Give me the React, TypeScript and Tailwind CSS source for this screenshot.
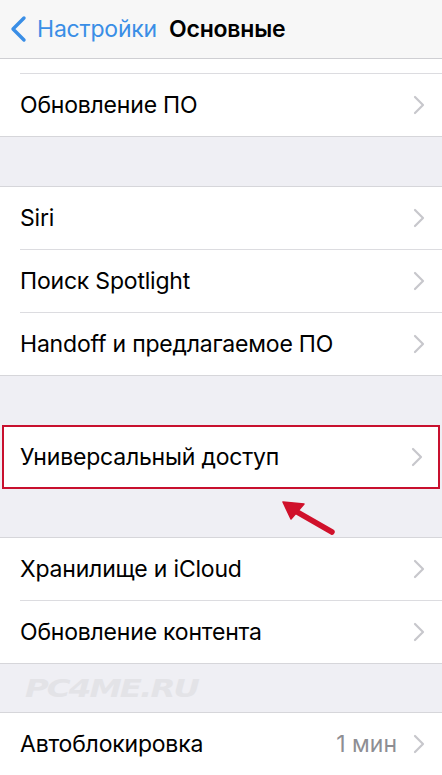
import React from "react";

const font = { fontFamily: 'Inter, "Liberation Sans", Arial, sans-serif' };

function Chevron() {
  return (
    <svg width="12" height="20" viewBox="0 0 12 20" className="shrink-0">
      <path d="M2 2 L10 10 L2 18" fill="none" stroke="#c7c7cc" strokeWidth="2.2" strokeLinecap="round" strokeLinejoin="round" />
    </svg>
  );
}

function Row({ label, value }: { label: string; value?: string }) {
  return (
    <div className="flex h-[62px] items-center bg-white pl-[20px] pr-[17px]">
      <div className="flex-1 text-[23px] tracking-[-0.2px] text-black">{label}</div>
      {value && <div className="mr-[16px] text-[23px] text-[#8e8e93]">{value}</div>}
      <Chevron />
    </div>
  );
}

function Sep() {
  return <div className="ml-[20px] h-px bg-[#dcdce0]" />;
}

function Group({ items }: { items: { label: string; value?: string }[] }) {
  return (
    <div className="border-y border-[#d6d6da] bg-white">
      {items.map((it, i) => (
        <React.Fragment key={it.label}>
          <Row label={it.label} value={it.value} />
          {i < items.length - 1 && <Sep />}
        </React.Fragment>
      ))}
    </div>
  );
}

export default function App() {
  return (
    <div className="flex h-[775px] w-[442px] flex-col overflow-hidden bg-[#efeff4]" style={font}>
      <div className="flex h-[59px] shrink-0 items-center border-b border-[#cfcfd3] bg-[#f7f7f7]">
        <svg width="20" height="28" viewBox="0 0 20 28" className="ml-[9px]">
          <path d="M15 3 L4 14 L15 25" fill="none" stroke="#3a8ee6" strokeWidth="3.4" strokeLinecap="round" strokeLinejoin="round" />
        </svg>
        <span className="ml-[8px] text-[23px] tracking-[-0.2px] text-[#3a8ee6]">Настройки</span>
        <span className="ml-[12px] text-[23px] font-semibold tracking-[-0.2px] text-black">Основные</span>
      </div>
      <div className="flex h-[15px] shrink-0 flex-col justify-end bg-white">
        <Sep />
      </div>
      <div className="border-b border-[#d6d6da] bg-white">
        <Row label="Обновление ПО" />
      </div>
      <div className="h-[49px] shrink-0" />
      <Group items={[{ label: "Siri" }, { label: "Поиск Spotlight" }, { label: "Handoff и предлагаемое ПО" }]} />
      <div className="h-[49px] shrink-0" />
      <div className="mx-[2px] border-2 border-[#c8102e] bg-white">
        <div className="flex h-[60px] items-center pl-[16px] pr-[15px]">
          <div className="flex-1 text-[23px] tracking-[-0.2px] text-black">Универсальный доступ</div>
          <Chevron />
        </div>
      </div>
      <div className="relative h-[48px] shrink-0">
        <svg width="60" height="48" viewBox="0 0 60 48" className="absolute left-[278px] top-0">
          <path d="M14 20 L54 43" stroke="#d0112b" strokeWidth="5.5" strokeLinecap="round" />
          <path d="M5 13 L26 15 L13 30 Z" fill="#d0112b" stroke="#d0112b" strokeWidth="1.5" strokeLinejoin="round" />
        </svg>
      </div>
      <Group items={[{ label: "Хранилище и iCloud" }, { label: "Обновление контента" }]} />
      <div className="flex h-[48px] shrink-0 items-center pl-[25px] pt-[2px]">
        <span
          className="origin-left scale-x-[1.3] text-[25px] font-bold italic tracking-[-1.5px] text-[#e3e3e7]"
          style={{ fontFamily: '"DejaVu Sans", sans-serif' }}
        >
          PC4ME.RU
        </span>
      </div>
      <Group items={[{ label: "Автоблокировка", value: "1 мин" }]} />
    </div>
  );
}
